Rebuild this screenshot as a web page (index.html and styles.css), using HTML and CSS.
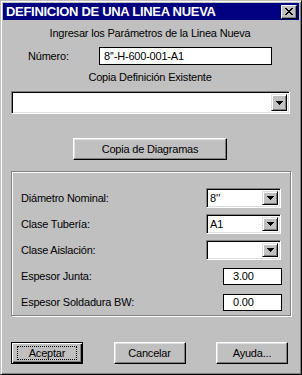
FILE: index.html
```html
<!DOCTYPE html>
<html lang="es">
<head>
  <meta charset="UTF-8">
  <title>Definicion de una Linea Nueva</title>
  <link rel="stylesheet" href="styles.css">
</head>
<body>

<div class="window">
  <div class="titlebar">
    <span class="title">DEFINICION DE UNA LINEA NUEVA</span>
    <span class="close-btn">
      <svg width="8" height="7" viewBox="0 0 8 7">
        <path d="M0 0h2v1h1v1h2v-1h1v-1h2v1h-1v1h-1v1h-1v1h1v1h1v1h1v1h-2v-1h-1v-1h-2v1h-1v1h-2v-1h1v-1h1v-1h1v-1h-1v-1h-1v-1h-1z" fill="#000"/>
      </svg>
    </span>
  </div>

  <div class="content">
    <p class="caption intro">Ingresar los Parámetros de la Linea Nueva</p>

    <div class="numero-row">
      <span class="label">Número:</span>
      <div class="flat-input numero">8''-H-600-001-A1</div>
    </div>

    <p class="caption copia">Copia Definición Existente</p>

    <div class="combo combo-wide">
      <span class="combo-text"></span>
      <span class="drop-btn">
        <svg width="7" height="4" viewBox="0 0 7 4"><path d="M0 0h7v1h-1v1h-1v1h-1v1h-1v-1h-1v-1h-1v-1h-1z" fill="#000"/></svg>
      </span>
    </div>

    <div class="btn btn-diagramas">Copia de Diagramas</div>

    <div class="panel">
      <div class="field-row">
        <span class="label">Diámetro Nominal:</span>
        <div class="combo combo-small">
          <span class="combo-text">8''</span>
          <span class="drop-btn">
            <svg width="7" height="4" viewBox="0 0 7 4"><path d="M0 0h7v1h-1v1h-1v1h-1v1h-1v-1h-1v-1h-1v-1h-1z" fill="#000"/></svg>
          </span>
        </div>
      </div>
      <div class="field-row">
        <span class="label">Clase Tubería:</span>
        <div class="combo combo-small">
          <span class="combo-text">A1</span>
          <span class="drop-btn">
            <svg width="7" height="4" viewBox="0 0 7 4"><path d="M0 0h7v1h-1v1h-1v1h-1v1h-1v-1h-1v-1h-1v-1h-1z" fill="#000"/></svg>
          </span>
        </div>
      </div>
      <div class="field-row">
        <span class="label">Clase Aislación:</span>
        <div class="combo combo-small">
          <span class="combo-text"></span>
          <span class="drop-btn">
            <svg width="7" height="4" viewBox="0 0 7 4"><path d="M0 0h7v1h-1v1h-1v1h-1v1h-1v-1h-1v-1h-1v-1h-1z" fill="#000"/></svg>
          </span>
        </div>
      </div>
      <div class="field-row">
        <span class="label">Espesor Junta:</span>
        <div class="flat-input num-input">3.00</div>
      </div>
      <div class="field-row">
        <span class="label">Espesor Soldadura BW:</span>
        <div class="flat-input num-input">0.00</div>
      </div>
    </div>

    <div class="actions">
      <div class="btn btn-action btn-default"><span class="focus-rect">Aceptar</span></div>
      <div class="btn btn-action">Cancelar</div>
      <div class="btn btn-action">Ayuda...</div>
    </div>
  </div>
</div>

</body>
</html>
```

FILE: styles.css
```css
* {margin:0;padding:0;box-sizing:border-box}
body {
  background: #c0c0c0;
  font-family: "Liberation Sans", Arial, sans-serif;
  font-size: 11px;
  color: #000;
}

/* window frame */
.window {
  width: 302px;
  height: 375px;
  background: #c0c0c0;
  border: 1px solid;
  border-color: #c0c0c0 #000 #000 #c0c0c0;
  box-shadow: inset 1px 1px #fff, inset -1px -1px #808080;
  padding: 2px;
}
.titlebar {
  height: 17px;
  background: #000080;
  display: flex;
  align-items: center;
  justify-content: space-between;
  padding: 0 2px 0 3px;
}
.title {
  color: #fff;
  font-weight: bold;
  font-size: 13px;
  letter-spacing: -0.3px;
}
.close-btn {
  width: 16px;
  height: 14px;
  background: #c0c0c0;
  border: 1px solid;
  border-color: #fff #000 #000 #fff;
  box-shadow: inset -1px -1px #808080;
  display: flex;
  align-items: center;
  justify-content: center;
}

.content {
  padding: 0 10px 0 8px;
}
.caption {
  text-align: center;
  line-height: 13px;
  letter-spacing: -0.2px;
}
.intro {margin-top:7px;}
.copia {margin-top:6px;}
.label {letter-spacing:-0.2px;}

.numero-row {
  display: flex;
  align-items: center;
  margin-top: 7px;
  padding-left: 17px;
}
.numero-row .label {width:71px;}

.flat-input {
  background: #fff;
  border: 1px solid #000;
  display: flex;
  align-items: center;
  letter-spacing: -0.2px;
}
.numero {
  width: 173px;
  height: 18px;
  padding-left: 4px;
}

/* sunken combo box */
.combo {
  background: #fff;
  border: 1px solid;
  border-color: #808080 #fff #fff #808080;
  box-shadow: inset 1px 1px #000, inset -1px -1px #dfdfdf;
  display: flex;
  align-items: stretch;
  padding: 2px;
}
.combo-text {
  flex: 1;
  display: flex;
  align-items: center;
  padding-left: 1px;
}
.drop-btn {
  width: 16px;
  background: #c0c0c0;
  border: 1px solid;
  border-color: #dfdfdf #000 #000 #dfdfdf;
  box-shadow: inset 1px 1px #fff, inset -1px -1px #808080;
  display: flex;
  align-items: center;
  justify-content: center;
}
.combo-wide {
  width: 279px;
  height: 23px;
  margin-top: 7px;
}
.combo-small {
  width: 75px;
  height: 20px;
}

/* raised buttons */
.btn {
  background: #c0c0c0;
  border: 1px solid;
  border-color: #fff #000 #000 #fff;
  box-shadow: inset -1px -1px #808080, inset 1px 1px #dfdfdf;
  display: flex;
  align-items: center;
  justify-content: center;
  letter-spacing: -0.2px;
}
.btn-diagramas {
  width: 154px;
  height: 22px;
  margin: 24px auto 0;
}

.panel {
  margin-top: 11px;
  width: 280px;
  height: 145px;
  border: 1px solid #808080;
  box-shadow: inset 1px 1px #fff, 1px 1px #fff;
  padding: 16px 9px 0 9px;
  display: flex;
  flex-direction: column;
  gap: 6px;
}
.field-row {
  height: 20px;
  display: flex;
  align-items: center;
  justify-content: space-between;
}
.num-input {
  width: 59px;
  height: 17px;
  padding-left: 9px;
  margin-right: -1px;
}

.actions {
  margin-top: 26px;
  display: flex;
  justify-content: space-between;
  padding-right: 1px;
}
.btn-action {
  width: 72px;
  height: 22px;
}
.btn-default {
  border: 1px solid #000;
  box-shadow: inset 1px 1px #fff, inset -1px -1px #000, inset -2px -2px #808080;
}
.focus-rect {
  border: 1px dotted #000;
  width: 60px;
  height: 14px;
  display: flex;
  align-items: center;
  justify-content: center;
}
```
